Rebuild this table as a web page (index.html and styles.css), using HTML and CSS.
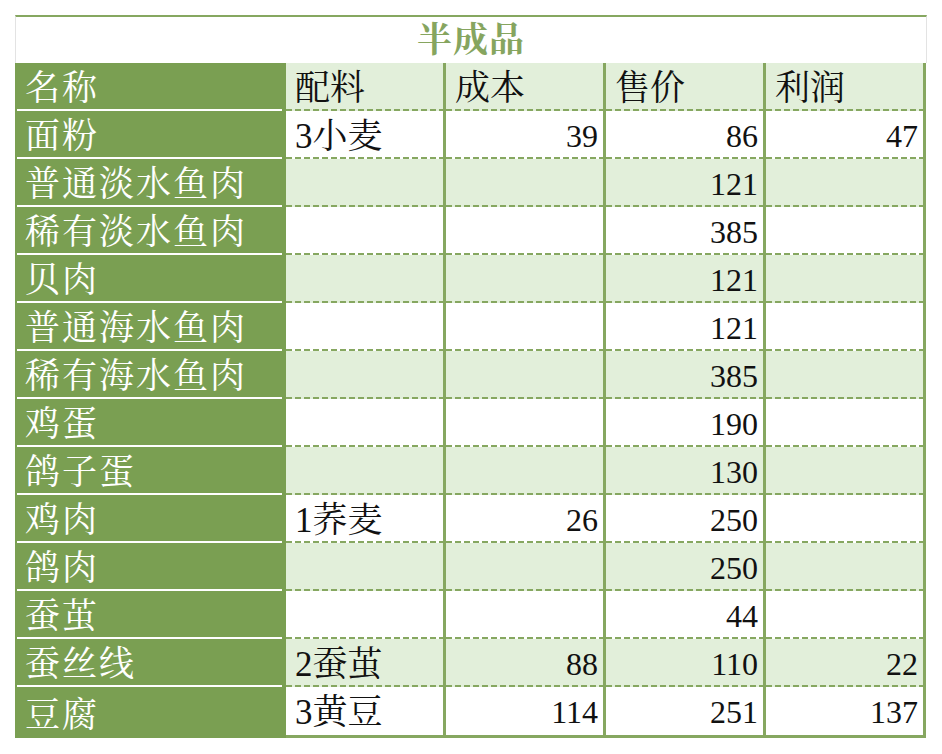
FILE: index.html
```html
<!DOCTYPE html>
<html lang="zh-CN">
<head>
<meta charset="utf-8">
<title>半成品</title>
<link rel="stylesheet" href="styles.css">
</head>
<body>
<div class="sheet">
  <div class="title">半成品</div>
  <div class="grid">
    <div class="row alt"><div class="name">名称</div><div class="cell">配料</div><div class="cell">成本</div><div class="cell">售价</div><div class="cell">利润</div></div>
    <div class="row"><div class="name">面粉</div><div class="cell">3小麦</div><div class="cell num">39</div><div class="cell num">86</div><div class="cell num">47</div></div>
    <div class="row alt"><div class="name">普通淡水鱼肉</div><div class="cell"></div><div class="cell"></div><div class="cell num">121</div><div class="cell"></div></div>
    <div class="row"><div class="name">稀有淡水鱼肉</div><div class="cell"></div><div class="cell"></div><div class="cell num">385</div><div class="cell"></div></div>
    <div class="row alt"><div class="name">贝肉</div><div class="cell"></div><div class="cell"></div><div class="cell num">121</div><div class="cell"></div></div>
    <div class="row"><div class="name">普通海水鱼肉</div><div class="cell"></div><div class="cell"></div><div class="cell num">121</div><div class="cell"></div></div>
    <div class="row alt"><div class="name">稀有海水鱼肉</div><div class="cell"></div><div class="cell"></div><div class="cell num">385</div><div class="cell"></div></div>
    <div class="row"><div class="name">鸡蛋</div><div class="cell"></div><div class="cell"></div><div class="cell num">190</div><div class="cell"></div></div>
    <div class="row alt"><div class="name">鸽子蛋</div><div class="cell"></div><div class="cell"></div><div class="cell num">130</div><div class="cell"></div></div>
    <div class="row"><div class="name">鸡肉</div><div class="cell">1荞麦</div><div class="cell num">26</div><div class="cell num">250</div><div class="cell"></div></div>
    <div class="row alt"><div class="name">鸽肉</div><div class="cell"></div><div class="cell"></div><div class="cell num">250</div><div class="cell"></div></div>
    <div class="row"><div class="name">蚕茧</div><div class="cell"></div><div class="cell"></div><div class="cell num">44</div><div class="cell"></div></div>
    <div class="row alt"><div class="name">蚕丝线</div><div class="cell">2蚕茧</div><div class="cell num">88</div><div class="cell num">110</div><div class="cell num">22</div></div>
    <div class="row last"><div class="name">豆腐</div><div class="cell">3黄豆</div><div class="cell num">114</div><div class="cell num">251</div><div class="cell num">137</div></div>
  </div>
</div>
</body>
</html>
```

FILE: styles.css
```css
html, body {
  margin: 0;
  padding: 0;
  background: #ffffff;
}

body {
  font-family: "Liberation Serif", "Noto Serif CJK SC", "Noto Sans CJK SC", serif;
  color: #111111;
}

.sheet {
  padding: 15px 0 0 15px;
  width: 912px;
}

.title {
  height: 46px;
  border-top: 2px solid #86a760;
  border-left: 1px solid #e3e3e3;
  border-right: 1px solid #e3e3e3;
  display: flex;
  align-items: flex-end;
  justify-content: center;
  font-size: 35px;
  line-height: 44px;
  letter-spacing: 1px;
  color: #86a55f;
  font-weight: 700;
}

.grid {
  display: grid;
  grid-template-columns: 271px repeat(4, 160px);
  grid-template-rows: repeat(13, 48px) 51px;
}

.row {
  display: contents;
}

.name,
.cell {
  display: flex;
  align-items: flex-end;
  font-size: 35px;
  line-height: 44px;
  white-space: nowrap;
  overflow: hidden;
}

.name {
  background: linear-gradient(#ffffff, #ffffff) no-repeat 2px 100% / 265px 2px, #7a9f52;
  color: #ffffff;
  letter-spacing: 2px;
  padding: 0 0 0 10px;
}

.cell {
  border-right: 3px solid #86a760;
  padding: 0 5px 0 9px;
  background: repeating-linear-gradient(90deg, #86a760 0 6px, transparent 6px 9px) no-repeat 0 100% / 100% 2px, #ffffff;
}

.alt .cell {
  background-color: #e2efda;
}

.num {
  justify-content: flex-end;
  font-size: 32px;
  padding-bottom: 1px;
}

.last .name {
  background: #7a9f52;
}

.last .cell {
  background: #ffffff;
  border-bottom: 3px solid #86a760;
}
```
